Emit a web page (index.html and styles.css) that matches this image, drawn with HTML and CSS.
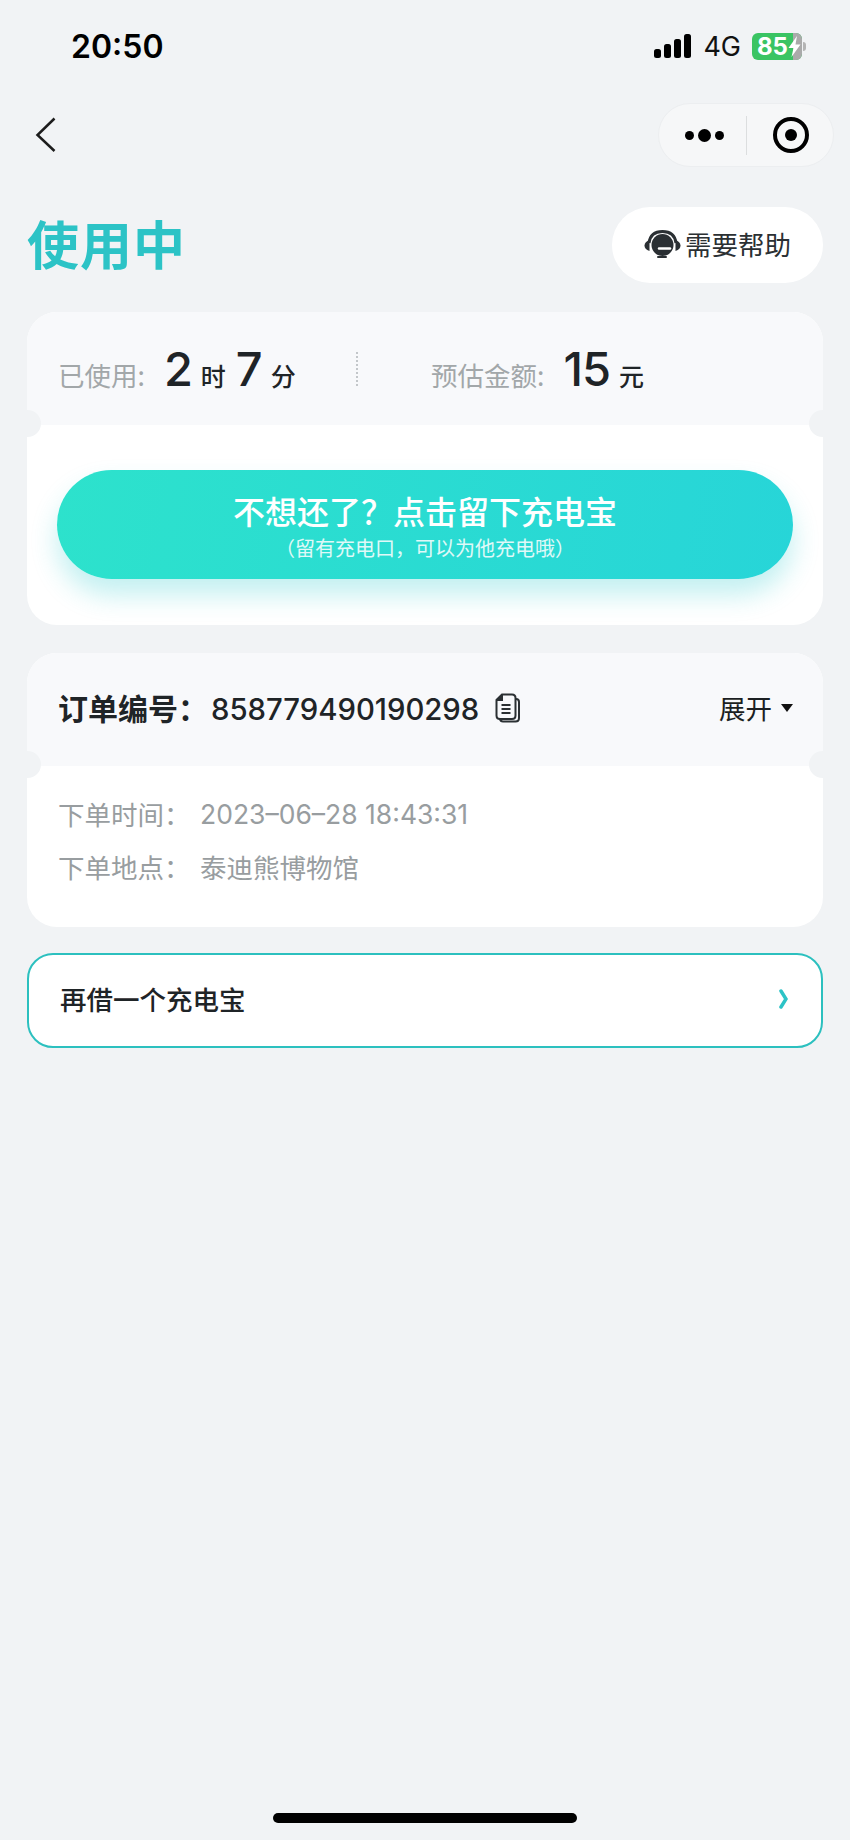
FILE: index.html
```html
<!DOCTYPE html>
<html lang="zh-CN">
<head>
  <meta charset="UTF-8">
  <title>使用中</title>
  <meta name="viewport" content="width=device-width, initial-scale=1.0">
  <link rel="stylesheet" href="styles.css">
</head>
<body>
  <div class="phone">
    <div class="status-bar">
      <span class="clock">20:50</span>
      <div class="status-right">
        <svg class="signal" width="37" height="24" viewBox="0 0 37 24">
          <rect x="0" y="15" width="7" height="9" rx="2.5"/>
          <rect x="10" y="10" width="7" height="14" rx="2.5"/>
          <rect x="20" y="5" width="7" height="19" rx="2.5"/>
          <rect x="30" y="0" width="7" height="24" rx="2.5"/>
        </svg>
        <span class="net">4G</span>
        <div class="battery">
          <i class="battery-rest"></i>
          <span class="battery-num">85</span>
          <svg class="bolt" width="13" height="21" viewBox="0 0 13 21"><path d="M9 0 L0.5 12 H5.5 L3.5 21 L12.5 8.5 H7.5 Z"/></svg>
        </div>
        <i class="battery-cap"></i>
      </div>
    </div>

    <div class="nav-bar">
      <svg class="back" width="22" height="36" viewBox="0 0 22 36"><path d="M19.5 1.5 L2.5 18 L19.5 34"/></svg>
      <div class="capsule">
        <div class="capsule-dots"><i></i><i class="big"></i><i></i></div>
        <i class="capsule-line"></i>
        <div class="capsule-target"><i></i></div>
      </div>
    </div>

    <div class="title-row">
      <h1>使用中</h1>
      <div class="help">
        <svg width="37" height="28" viewBox="0 0 37 28">
          <path d="M5 13 C6 5 11 1.5 18.5 1.5 C26 1.5 31 5 32 13" fill="none" stroke="#2a2f33" stroke-width="3"/>
          <path d="M5.5 10 L5.5 21 C2 20 0.5 18 0.5 15.5 C0.5 13 2.5 11 5.5 10 Z" fill="#2a2f33"/>
          <path d="M31.5 10 L31.5 21 C35 20 36.5 18 36.5 15.5 C36.5 13 34.5 11 31.5 10 Z" fill="#2a2f33"/>
          <circle cx="18.5" cy="15" r="11" fill="#2a2f33"/>
          <path d="M15 18.5 H26" stroke="#fff" stroke-width="2.5" stroke-linecap="round"/>
          <path d="M14 27 H22" stroke="#2a2f33" stroke-width="2" stroke-linecap="round"/>
        </svg>
        <span>需要帮助</span>
      </div>
    </div>

    <section class="card">
      <div class="card-head usage">
        <div class="usage-part">
          <span class="label">已使用:</span>
          <b class="num">2</b><span class="unit">时</span>
          <b class="num">7</b><span class="unit">分</span>
        </div>
        <i class="dots-line"></i>
        <div class="usage-part cost">
          <span class="label">预估金额:</span>
          <b class="num">15</b><span class="unit">元</span>
        </div>
      </div>
      <i class="notch left"></i>
      <i class="notch right"></i>
      <div class="card-body keep-wrap">
        <div class="keep-btn">
          <div class="keep-title">不想还了&#xFF1F;点击留下充电宝</div>
          <div class="keep-sub">&#xFF08;留有充电口&#xFF0C;可以为他充电哦&#xFF09;</div>
        </div>
      </div>
    </section>

    <section class="card">
      <div class="card-head order">
        <span class="order-label">订单编号&#xFF1A;</span>
        <span class="order-no">858779490190298</span>
        <svg class="copy" width="25" height="30" viewBox="0 0 25 30">
          <path class="copy-line" d="M21 6 Q24 6 24 9 V25 Q24 28.5 20.5 28.5 H8 Q5.5 28.5 5 26"/>
          <path class="copy-line" d="M7 1.5 H17 Q20.5 1.5 20.5 5 V22.5 Q20.5 26 17 26 H5 Q1.5 26 1.5 22.5 V7 Z"/>
          <path class="copy-fold" d="M8 1 L1 8 H8 Z"/>
          <path class="copy-line" d="M6.5 12 H15.5 M6.5 16 H15.5 M6.5 20 H15.5"/>
        </svg>
        <div class="expand"><span>展开</span><i></i></div>
      </div>
      <i class="notch left"></i>
      <i class="notch right"></i>
      <div class="card-body info">
        <div class="info-row"><span class="info-key">下单时间&#xFF1A;</span><span class="info-date">2023–06–28 18:43:31</span></div>
        <div class="info-row"><span class="info-key">下单地点&#xFF1A;</span><span>泰迪熊博物馆</span></div>
      </div>
    </section>

    <div class="again">
      <span>再借一个充电宝</span>
      <svg width="9" height="20" viewBox="0 0 9 20"><path d="M2 2 L7 10 L2 18"/></svg>
    </div>

    <div class="home-bar"></div>
  </div>
</body>
</html>
```

FILE: styles.css
```css
* { box-sizing: border-box; }
body { margin: 0; background: #f1f3f5; color: #1f2427; font-family: "Noto Sans CJK SC", "Inter", sans-serif; }
i { display: block; }
h1 { margin: 0; }

.phone { position: relative; width: 850px; height: 1840px; padding: 0 27px; overflow: hidden; }

/* status bar */
.status-bar { display: flex; justify-content: space-between; align-items: center; height: 92px; padding: 0 0 0 44px; }
.clock { font-family: "Inter", sans-serif; font-weight: 600; font-size: 32px; color: #000; }
.status-right { display: flex; align-items: center; margin-right: 17px; }
.signal { fill: #000; margin-right: 12px; }
.net { font-family: "Inter", sans-serif; font-size: 27px; color: #111; margin-right: 11px; }
.battery { position: relative; display: flex; align-items: center; width: 50px; height: 27px; padding-left: 5px; border-radius: 6px; background: #3ac463; overflow: hidden; }
.battery-num { position: relative; font-family: "Inter", sans-serif; font-weight: 700; font-size: 24px; line-height: 27px; color: #fff; }
.bolt { position: relative; fill: #fff; flex: none; }
.battery-rest { position: absolute; right: 0; top: 0; width: 9px; height: 27px; background: #aaa; }
.battery-cap { width: 3px; height: 9px; margin-left: 1px; border-radius: 0 3px 3px 0; background: #b4b4b4; }

/* nav */
.nav-bar { display: flex; justify-content: space-between; align-items: center; height: 64px; margin: 11px -11px 0 0; padding-left: 8px; }
.back { fill: none; stroke: #1c1c1c; stroke-width: 2.5; }
.capsule { display: flex; align-items: center; width: 176px; height: 64px; border-radius: 32px; background: #f6f7f8; border: 1px solid #eceef0; }
.capsule-dots { display: flex; align-items: center; justify-content: center; gap: 4px; width: 87px; padding-left: 4px; }
.capsule-dots i { width: 9px; height: 9px; border-radius: 50%; background: #000; }
.capsule-dots i.big { width: 13px; height: 13px; }
.capsule-line { width: 1px; height: 39px; background: #dcdedf; }
.capsule-target { display: flex; align-items: center; justify-content: center; width: 36px; height: 36px; margin-left: 26px; border: 4px solid #000; border-radius: 50%; }
.capsule-target i { width: 12px; height: 12px; border-radius: 50%; background: #000; }

/* title */
.title-row { display: flex; justify-content: space-between; align-items: center; height: 76px; margin-top: 40px; margin-bottom: 29px; }
h1 { font-size: 52px; line-height: 72px; height: 76px; font-weight: 700; color: #2cc3c6; letter-spacing: 1px; }
.help { display: flex; align-items: center; justify-content: center; gap: 4px; width: 211px; height: 76px; padding-bottom: 2px; border-radius: 38px; background: #fff; font-size: 26.5px; line-height: 36px; color: #2b3033; }

/* cards */
.card { position: relative; margin-bottom: 28px; border-radius: 30px; background: #fff; overflow: hidden; }
.card + .card { margin-bottom: 26px; }
.card-head { display: flex; align-items: center; background: #f8f9fb; height: 113px; padding: 0 30px 0 31px; }
.notch { position: absolute; width: 27px; height: 27px; border-radius: 50%; background: #f1f3f5; z-index: 1; }
.notch.left { left: -13px; top: 98px; }
.notch.right { right: -13px; top: 98px; }

.usage-part { display: flex; align-items: baseline; width: 298px; }
.label { font-size: 26.5px; color: #a2a7a9; margin-right: 19px; }
.num { font-family: "Inter", sans-serif; font-weight: 500; font-size: 47px; line-height: 60px; letter-spacing: -1px; }
.unit { font-size: 25px; font-weight: 500; margin: 0 10px 0 9px; }
.dots-line { width: 0; height: 34px; border-left: 2px dotted #c3c7ca; }
.cost { margin-left: 73px; width: auto; }

.keep-wrap { padding: 45px 30px 46px; }
.keep-btn { display: flex; flex-direction: column; align-items: center; justify-content: center; height: 109px; border-radius: 55px; background: linear-gradient(100deg, #2de2cc, #27d5d8); color: #fff; box-shadow: 0 16px 26px rgba(40, 200, 205, 0.28); }
.keep-title { font-size: 32px; line-height: 46px; font-weight: 500; }
.keep-sub { font-size: 20px; line-height: 29px; opacity: 0.85; }

.order { padding-bottom: 4px; }
.order-label { font-size: 30px; font-weight: 700; padding-bottom: 2px; }
.order-no { font-family: "Inter", sans-serif; font-size: 29.3px; font-weight: 500; margin: 3px 16px 0 3px; }
.copy-line { fill: none; stroke: #2b3033; stroke-width: 2; }
.copy-fold { fill: #2b3033; }
.expand { display: flex; align-items: center; gap: 9px; margin-left: auto; font-size: 26.5px; color: #1b1f22; }
.expand i { width: 0; height: 0; border: 6px solid transparent; border-top: 8px solid #111; border-bottom: 0; }

.info { padding: 21px 30px 29px 31px; height: 161px; }
.info-row { display: flex; height: 53px; align-items: center; font-size: 26.5px; color: #989da0; }
.info-key { width: 142px; }
.info-date { font-family: "Inter", sans-serif; font-size: 26.5px; }

.again { display: flex; justify-content: space-between; align-items: center; height: 95px; padding: 0 33px 4px 31px; border: 2.5px solid #2cc0bf; border-radius: 26px; background: #fff; font-size: 26.5px; font-weight: 500; }
.again svg { fill: none; stroke: #2cc3c6; stroke-width: 3.5; stroke-linecap: round; }

.home-bar { position: absolute; left: 273px; top: 1813px; width: 304px; height: 10px; border-radius: 5px; background: #000; }
```
